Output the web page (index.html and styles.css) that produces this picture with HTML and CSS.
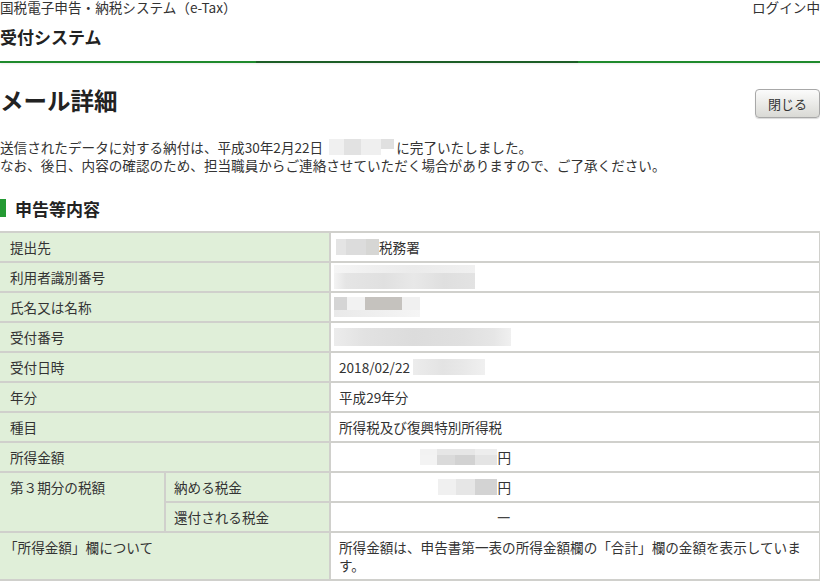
FILE: index.html
```html
<!DOCTYPE html>
<html lang="ja">
<head>
<meta charset="utf-8">
<title>メール詳細</title>
<link rel="stylesheet" href="styles.css">
</head>
<body>
<header class="site-header">
  <div class="topbar">
    <span class="site-title">国税電子申告・納税システム（e-Tax）</span>
    <span class="login-state">ログイン中</span>
  </div>
  <div class="system-name">受付システム</div>
</header>

<main class="content">
  <div class="title-row">
    <h1 class="page-title">メール詳細</h1>
    <button class="close-btn" type="button">閉じる</button>
  </div>

  <p class="notice">送信されたデータに対する納付は、平成30年2月22日<span class="blur blur-time"></span>に完了いたしました。<br>なお、後日、内容の確認のため、担当職員からご連絡させていただく場合がありますので、ご了承ください。</p>

  <h2 class="section-title">申告等内容</h2>

  <table class="detail-table">
    <colgroup>
      <col class="col-a">
      <col class="col-b">
      <col class="col-c">
    </colgroup>
    <tbody>
      <tr><th colspan="2">提出先</th><td><span class="blur blur-office"></span>税務署</td></tr>
      <tr><th colspan="2">利用者識別番号</th><td><span class="blur blur-id"></span></td></tr>
      <tr><th colspan="2">氏名又は名称</th><td><span class="blur blur-name"></span></td></tr>
      <tr><th colspan="2">受付番号</th><td><span class="blur blur-recv"></span></td></tr>
      <tr><th colspan="2">受付日時</th><td>2018/02/22 <span class="blur blur-clock"></span></td></tr>
      <tr><th colspan="2">年分</th><td>平成29年分</td></tr>
      <tr><th colspan="2">種目</th><td>所得税及び復興特別所得税</td></tr>
      <tr><th colspan="2">所得金額</th><td><div class="amount"><span class="blur blur-income"></span>円</div></td></tr>
      <tr><th rowspan="2" class="top">第３期分の税額</th><th class="sub">納める税金</th><td><div class="amount"><span class="blur blur-pay"></span>円</div></td></tr>
      <tr><th class="sub">還付される税金</th><td><div class="amount"><span class="dash">ー</span></div></td></tr>
      <tr><th colspan="2" class="top note-label">「所得金額」欄について</th><td>所得金額は、申告書第一表の所得金額欄の「合計」欄の金額を表示しています。</td></tr>
    </tbody>
  </table>
</main>
</body>
</html>
```

FILE: styles.css
```css
html, body {
  margin: 0;
  padding: 0;
  background: #ffffff;
}

body {
  width: 820px;
  font-family: "Noto Sans CJK JP", "Noto Sans", "Liberation Sans", sans-serif;
  font-size: 13.6px;
  color: #333333;
  overflow: hidden;
}

.site-header {
  border-bottom: 2px solid transparent;
  border-image: linear-gradient(to right, #1f8a2d 0, #1f8a2d 256px, #1d5e27 256px, #1d5e27 578px, #1f8a2d 578px) 1;
  box-shadow: 0 1px 2px rgba(0, 0, 0, 0.08);
}

.topbar {
  display: flex;
  justify-content: space-between;
  height: 15px;
  line-height: 15px;
}

.system-name {
  padding-top: 10px;
  padding-bottom: 12px;
  line-height: 24px;
  font-size: 17px;
  font-weight: bold;
  color: #222222;
}

.title-row {
  display: flex;
  justify-content: space-between;
  align-items: flex-start;
  margin-top: 22px;
}

.page-title {
  margin: 0;
  font-size: 23.5px;
  line-height: 30px;
  font-weight: bold;
  color: #222222;
}

.close-btn {
  margin-top: 4px;
  width: 65px;
  height: 29px;
  padding: 0;
  font-family: inherit;
  font-size: 13px;
  color: #333333;
  background: linear-gradient(#fbfbfb, #e9e9e6 55%, #d9d9d5);
  border: 1px solid #a8a8a8;
  border-radius: 4px;
  box-shadow: 0 1px 1px rgba(0, 0, 0, 0.15);
}

.notice {
  margin: 20px 0 0;
  line-height: 18px;
}

.section-title {
  display: flex;
  align-items: center;
  margin: 23px 0 0;
  height: 22px;
  font-size: 17px;
  font-weight: bold;
  color: #222222;
}

.section-title::before {
  content: "";
  width: 6px;
  height: 18px;
  margin-right: 9px;
  background: #249a33;
}

.detail-table {
  margin-top: 12px;
  width: 820px;
  border-collapse: collapse;
  table-layout: fixed;
}

.col-a { width: 165px; }
.col-b { width: 165px; }
.col-c { width: 490px; }

.detail-table th,
.detail-table td {
  border: 2px solid #d0d0cc;
  padding: 5px 8px;
  height: 18px;
  line-height: 18px;
  text-align: left;
  vertical-align: middle;
  font-weight: normal;
}

.detail-table th {
  background: #e0efd9;
}

.detail-table tr > :first-child {
  border-left: none;
  padding-left: 10px;
}

.detail-table th.sub {
  padding-left: 8px;
}

.detail-table th.top {
  vertical-align: top;
}

.detail-table th.note-label {
  padding-left: 4px;
}

.detail-table td {
  padding-left: 8px;
  padding-right: 10px;
}

.amount {
  width: 172px;
  text-align: right;
}

.dash {
  display: inline-block;
  transform: scaleX(1.1);
  color: #444444;
}

.blur {
  display: inline-block;
  vertical-align: top;
  height: 16px;
  margin-top: 1px;
  margin-bottom: 1px;
}

.blur-time {
  width: 65px;
  margin-left: 6px;
  margin-right: 2px;
  background:
    linear-gradient(#ffffff, #ffffff) 52px 10px / 13px 6px no-repeat,
    linear-gradient(to right, #f0f0f0 0, #f0f0f0 15px, #e2e2e2 15px, #e2e2e2 32px, #efefef 32px, #efefef 52px, #e0e0e0 52px);
}

.blur-office {
  width: 43px;
  margin-left: -3px;
  background: linear-gradient(to right, #e4e4e4 0, #e4e4e4 10px, #dcdcdc 10px, #dcdcdc 30px, #d6d6d4 30px);
}

.blur-id {
  width: 141px;
  height: 24px;
  margin-top: -3px;
  margin-bottom: -3px;
  margin-left: -5px;
  background:
    linear-gradient(to right, #f5f5f5 0, #efefef 40px, #ebebeb 80px, #f0f0f0 141px) 0 0 / 141px 8px no-repeat,
    linear-gradient(to right, #f3f3f3 0, #e5e5e5 12px, #e0e0e0 50px, #e8e8e8 80px, #dfdfdf 110px, #e3e3e3 141px) 0 8px / 141px 16px no-repeat;
}

.blur-name {
  width: 86px;
  height: 20px;
  margin-top: -1px;
  margin-bottom: -1px;
  margin-left: -5px;
  background:
    linear-gradient(#c5c2be, #c5c2be) 31px 0 / 37px 13px no-repeat,
    linear-gradient(to right, #d5d5d5 0, #d5d5d5 13px, #f2f2f2 13px, #f2f2f2 31px, #c8c5c2 31px, #c8c5c2 68px, #f0f0f0 68px) 0 0 / 86px 13px no-repeat,
    linear-gradient(to right, #e9e9e9, #f5f5f5) 0 13px / 86px 7px no-repeat;
}

.blur-recv {
  width: 177px;
  height: 18px;
  margin-top: 0;
  margin-bottom: 0;
  margin-left: -5px;
  background: linear-gradient(to right, #ececec 0, #e2e2e2 30px, #dcdcdc 80px, #e0e0e0 130px, #e6e6e6 160px, #f0f0f0 177px);
}

.blur-clock {
  width: 72px;
  background: linear-gradient(to right, #ececec 0, #e3e3e3 30px, #e8e8e8 50px, #f0f0f0 72px);
}

.blur-income {
  width: 77px;
  background:
    linear-gradient(to right, #f2f2f2 0, #f2f2f2 17px, #e6e6e6 17px, #e6e6e6 55px, #ededed 55px) 0 0 / 77px 6px no-repeat,
    linear-gradient(to right, #f3f3f3 0, #f3f3f3 17px, #dadada 17px, #dadada 35px, #d2d2d2 35px, #d2d2d2 55px, #e4e4e4 55px) 0 6px / 77px 10px no-repeat;
}

.blur-pay {
  width: 59px;
  background: linear-gradient(to right, #f0f0f0 0, #f0f0f0 18px, #e6e6e6 18px, #e6e6e6 37px, #d3d3d3 37px);
}
```
